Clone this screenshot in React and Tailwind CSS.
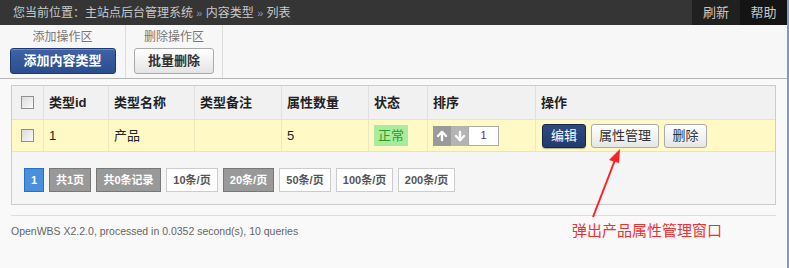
import { ArrowUp, ArrowDown } from "lucide-react"

const font = { fontFamily: '"Liberation Sans", Arial, "Noto Sans CJK SC", sans-serif' }

const Checkbox = () => (
    <span className="inline-block h-[13px] w-[13px] border border-[#8f8f8f] bg-gradient-to-br from-[#dcdcdc] to-[#fafafa]" />
)

const cols = [
    { label: "", w: "w-[32px]" },
    { label: "类型id", w: "w-[65px]" },
    { label: "类型名称", w: "w-[86px]" },
    { label: "类型备注", w: "w-[87px]" },
    { label: "属性数量", w: "w-[87px]" },
    { label: "状态", w: "w-[59px]" },
    { label: "排序", w: "w-[108px]" },
    { label: "操作", w: "flex-1" },
]

const pages = [
    { t: "1", cls: "w-[20px] bg-[#4a8fde] border-[#2a6fc0] text-white" },
    { t: "共1页", cls: "w-[42px] bg-[#999] border-[#777] text-white" },
    { t: "共0条记录", cls: "w-[65px] bg-[#999] border-[#777] text-white" },
    { t: "10条/页", cls: "w-[52px] bg-white border-[#ccc] text-[#555]" },
    { t: "20条/页", cls: "w-[51px] bg-[#999] border-[#777] text-white" },
    { t: "50条/页", cls: "w-[52px] bg-white border-[#ccc] text-[#555]" },
    { t: "100条/页", cls: "w-[57px] bg-white border-[#ccc] text-[#555]" },
    { t: "200条/页", cls: "w-[57px] bg-white border-[#ccc] text-[#555]" },
]

export default function App() {
    return (
        <div className="relative h-[268px] w-[789px] overflow-hidden bg-[#f9f9f9] border-r-2 border-[#7d9cc0]" style={font}>
            {/* barra superior */}
            <div className="flex h-[25px] items-center bg-[#353535] text-[12px] text-[#c8c8c8]">
                <div className="flex-1 pl-[13px]">
                    您当前位置：主站点后台管理系统 <span className="text-[#7d9cc0] text-[11px]">»</span> 内容类型{" "}
                    <span className="text-[#7d9cc0] text-[11px]">»</span> 列表
                </div>
                <div className="flex h-full w-[48px] items-center justify-center bg-[#202020] text-[13px]">刷新</div>
                <div className="flex h-full w-[47px] items-center justify-center bg-[#141414] text-[13px]">帮助</div>
            </div>

            {/* zona de operaciones */}
            <div className="flex h-[54px] border-b border-[#b5b5b5] bg-[#f7f7f7]">
                <div className="flex w-[126px] flex-col items-center border-r border-[#ddd] pt-[4px]">
                    <div className="text-[12px] leading-[16px] text-[#777]">添加操作区</div>
                    <button className="mt-[3px] h-[26px] w-[106px] rounded-[3px] border border-[#1d3870] bg-gradient-to-b from-[#3f63a6] to-[#2b4d8e] text-[13px] font-bold text-white shadow-[inset_0_1px_0_rgba(255,255,255,0.25)]">
                        添加内容类型
                    </button>
                </div>
                <div className="flex w-[97px] flex-col items-center border-r border-[#ddd] pt-[4px]">
                    <div className="text-[12px] leading-[16px] text-[#777]">删除操作区</div>
                    <button className="mt-[3px] h-[26px] w-[80px] rounded-[3px] border border-[#aaa] bg-gradient-to-b from-white to-[#e4e4e4] text-[13px] font-bold text-[#333]">
                        批量删除
                    </button>
                </div>
            </div>

            {/* tabla */}
            <div className="mx-[11px] mt-[6px] border border-[#ccc] bg-[#f5f5f5]">
                <div className="flex h-[33px] bg-[#f1f1f1] text-[13px] font-bold text-[#222]">
                    {cols.map((c, i) => (
                        <div key={i} className={`${c.w} flex items-center border-r border-[#e0e0e0] last:border-r-0 ${i === 0 ? "justify-center" : "pl-[5px]"}`}>
                            {i === 0 ? <Checkbox /> : c.label}
                        </div>
                    ))}
                </div>
                <div className="flex h-[33px] border-t border-b border-[#e4e4cc] bg-[#fffac5] text-[13px] text-[#222]">
                    <div className="flex w-[32px] items-center justify-center border-r border-[#ece9c0]"><Checkbox /></div>
                    <div className="flex w-[65px] items-center border-r border-[#ece9c0] pl-[5px]">1</div>
                    <div className="flex w-[86px] items-center border-r border-[#ece9c0] pl-[5px]">产品</div>
                    <div className="w-[87px] border-r border-[#ece9c0]" />
                    <div className="flex w-[87px] items-center border-r border-[#ece9c0] pl-[5px]">5</div>
                    <div className="flex w-[59px] items-center border-r border-[#ece9c0] pl-[5px]">
                        <span className="flex h-[21px] items-center bg-[#a9ec9f] px-[4px] text-[#2f9a1e]">正常</span>
                    </div>
                    <div className="flex w-[108px] items-center border-r border-[#ece9c0] pl-[5px]">
                        <span className="flex h-[20px] w-[18px] items-center justify-center bg-[#9a9a9a]">
                            <ArrowUp size={14} strokeWidth={4} color="#fff" />
                        </span>
                        <span className="flex h-[20px] w-[17px] items-center justify-center bg-[#b4b4b4]">
                            <ArrowDown size={14} strokeWidth={4} color="#fff" />
                        </span>
                        <span className="flex h-[20px] w-[31px] items-center justify-center border border-[#aaa] bg-white text-[11px] text-[#6b2a6b]">1</span>
                    </div>
                    <div className="flex flex-1 items-center gap-[5px] pl-[6px]">
                        <button className="h-[24px] w-[44px] rounded-[3px] border border-[#15264a] bg-gradient-to-b from-[#2f4a80] to-[#213b6e] text-[13px] text-white shadow-[0_1px_1px_rgba(0,0,0,0.3)]">编辑</button>
                        <button className="h-[24px] w-[68px] rounded-[3px] border border-[#aaa] bg-gradient-to-b from-white to-[#e6e6e6] text-[13px] text-[#333]">属性管理</button>
                        <button className="h-[24px] w-[43px] rounded-[3px] border border-[#aaa] bg-gradient-to-b from-white to-[#e6e6e6] text-[13px] text-[#333]">删除</button>
                    </div>
                </div>
                <div className="flex h-[52px] items-center gap-[5px] pl-[12px] pt-[4px]">
                    {pages.map((p) => (
                        <span key={p.t} className={`flex h-[24px] items-center justify-center border text-[11px] font-bold ${p.cls}`}>
                            {p.t}
                        </span>
                    ))}
                </div>
            </div>

            <div className="mx-[11px] mt-[10px] border-t border-[#ddd]" />
            <div className="pl-[11px] pt-[8px] text-[10.5px] text-[#666]">
                OpenWBS X2.2.0, processed in 0.0352 second(s), 10 queries
            </div>

            {/* anotación */}
            <svg className="absolute left-0 top-0" width="789" height="268">
                <line x1="593" y1="217" x2="615" y2="160" stroke="#f22" strokeWidth="2" />
                <polygon points="620,149 609,160 619,163" fill="#f22" />
            </svg>
            <div className="absolute left-[572px] top-[220px] text-[15px] text-[#f03030]">弹出产品属性管理窗口</div>
        </div>
    )
}
